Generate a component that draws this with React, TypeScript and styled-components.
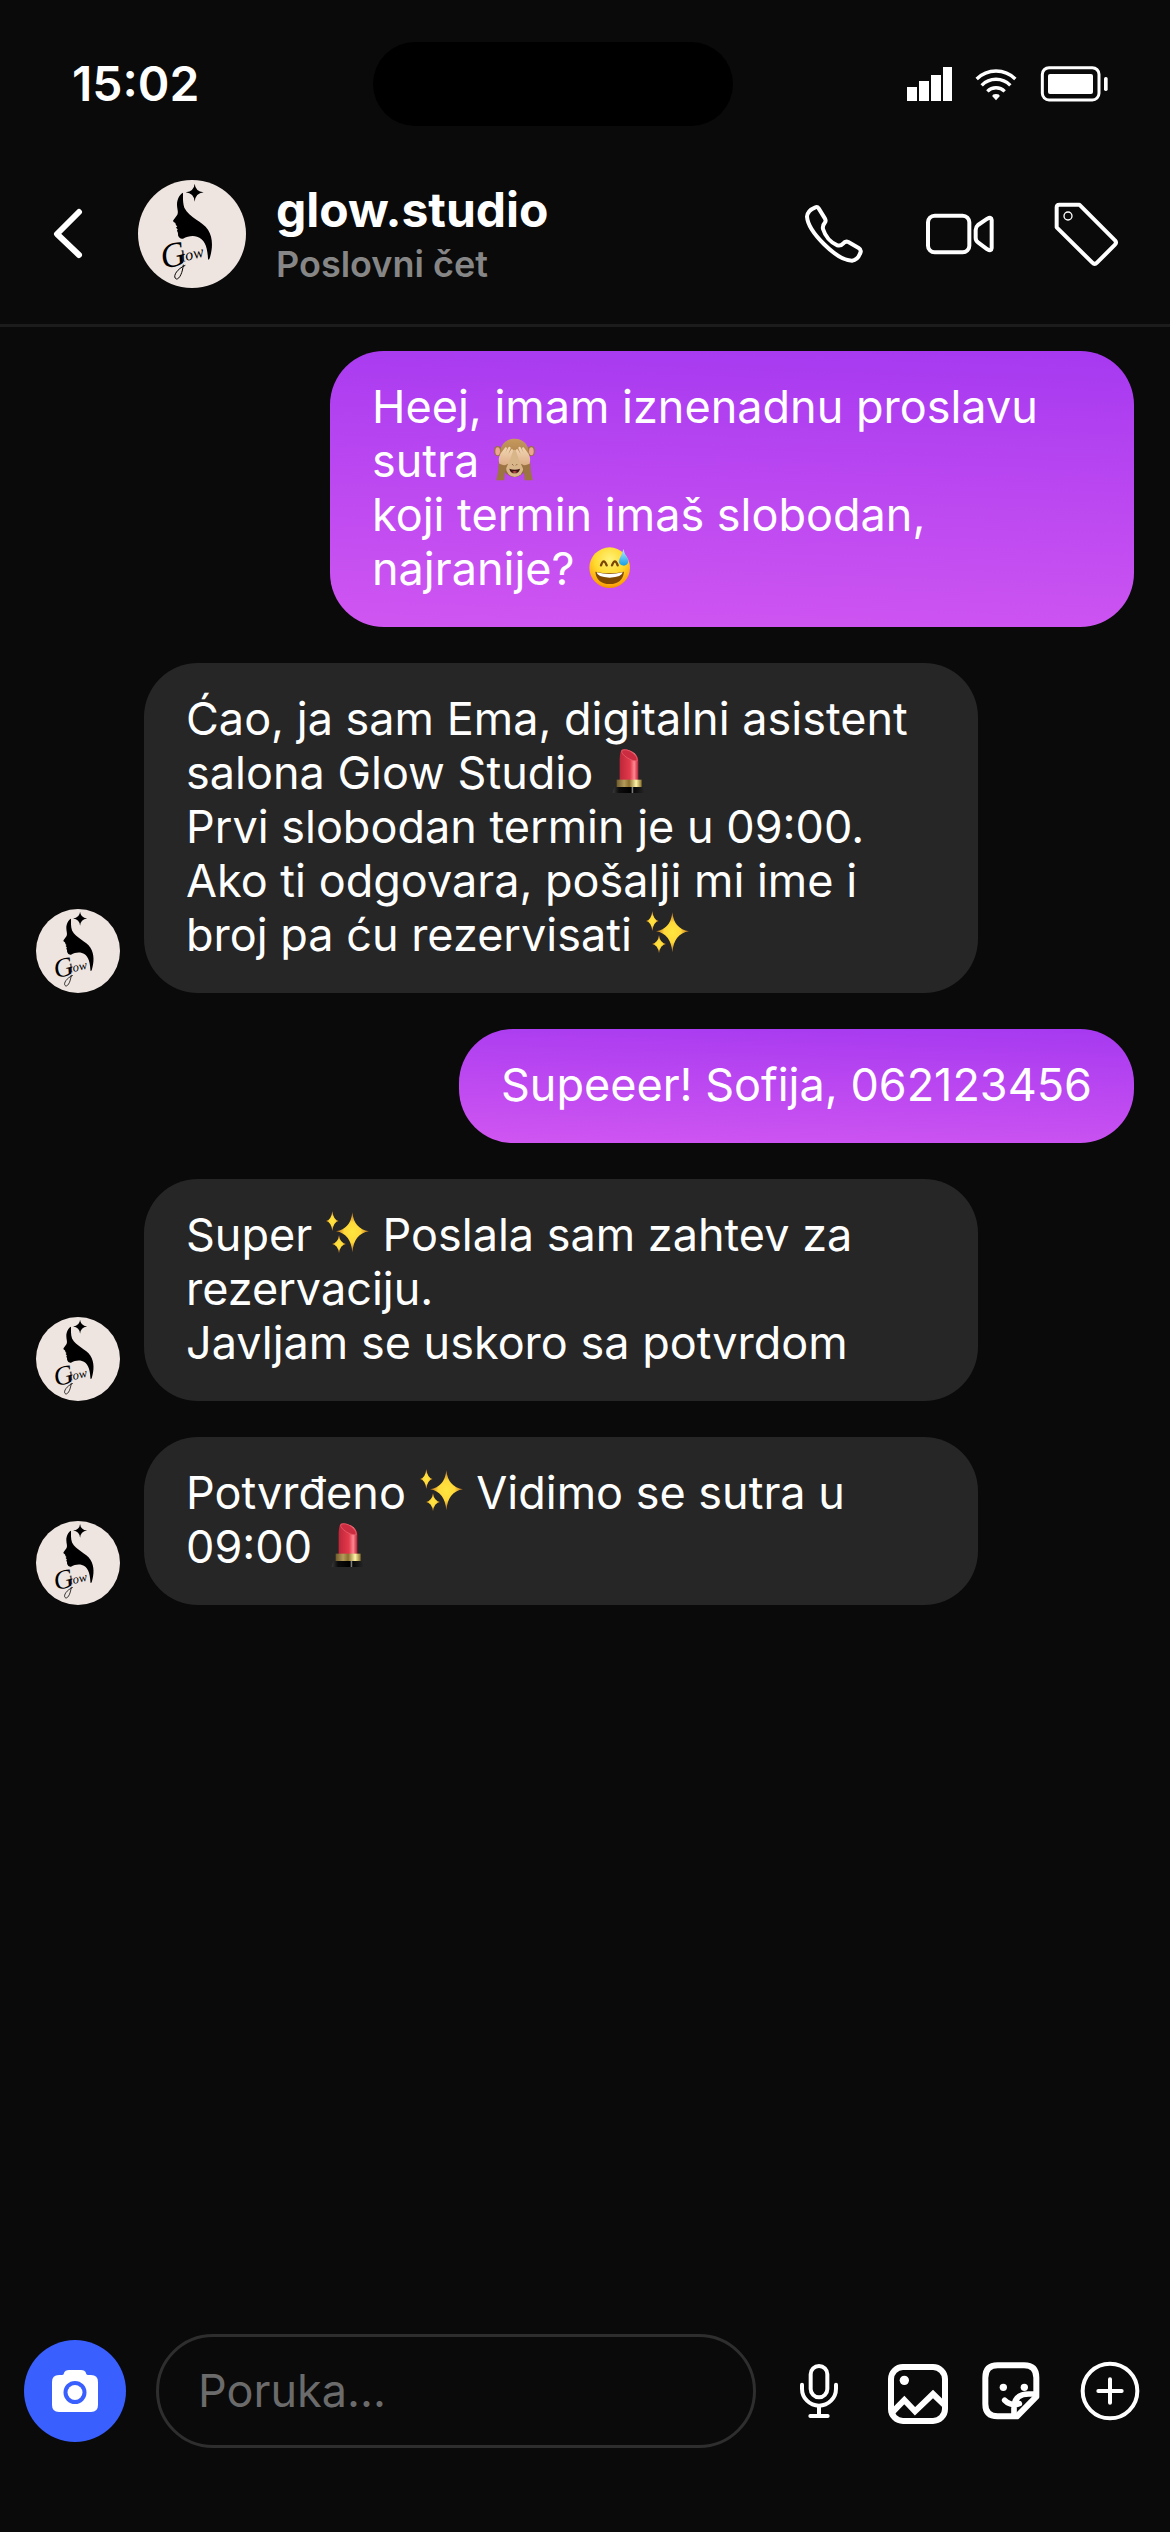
import React from 'react';
import styled, { createGlobalStyle } from 'styled-components';

const GlobalStyle = createGlobalStyle`
  * { box-sizing: border-box; }
  body {
    margin: 0;
    background: #0a0a0a;
    color: #fff;
    font-family: Inter, "Liberation Sans", sans-serif;
  }
`;

const Screen = styled.div`
  display: flex;
  flex-direction: column;
  min-height: 100vh;
`;

const StatusBar = styled.div`
  display: flex;
  justify-content: space-between;
  align-items: center;
  padding: 42px 62px 0 72px;
`;

const Clock = styled.time`
  font-size: 48px;
  line-height: 60px;
  font-weight: 600;
`;

const Island = styled.div`
  width: 360px;
  height: 84px;
  border-radius: 42px;
  background: #000;
`;

const StatusIcons = styled.div`
  display: flex;
  align-items: center;
  gap: 23px;
`;

const Header = styled.header`
  display: flex;
  align-items: center;
  padding: 54px 51px 36px 36px;
  border-bottom: 3px solid #1c1c1c;
`;

const IconButton = styled.button`
  display: flex;
  align-items: center;
  justify-content: center;
  flex: none;
  padding: 0;
  border: 0;
  background: none;
  color: inherit;
  cursor: pointer;
`;

const Profile = styled.div`
  display: flex;
  align-items: center;
  gap: 30px;
  flex: 1;
  margin-left: 36px;
`;

const Name = styled.h1`
  margin: 0;
  font-size: 48px;
  line-height: 60px;
  font-weight: 700;
`;

const Subtitle = styled.p`
  margin: 0;
  font-size: 36px;
  line-height: 48px;
  font-weight: 600;
  color: #868686;
`;

const HeaderActions = styled.div`
  display: flex;
  align-items: center;
  gap: 58px;
`;

const AvatarFrame = styled.svg`
  display: block;
  flex: none;
  border-radius: 50%;
`;

const Chat = styled.main`
  display: flex;
  flex: 1;
  flex-direction: column;
  gap: 36px;
  padding: 24px 36px;
`;

const MessageRow = styled.div<{ $own?: boolean }>`
  display: flex;
  align-items: flex-end;
  justify-content: ${p => (p.$own ? 'flex-end' : 'flex-start')};
  gap: 24px;
`;

const Bubble = styled.p<{ $own?: boolean }>`
  margin: 0;
  max-width: ${p => (p.$own ? '804px' : '834px')};
  padding: 29px 42px 31px;
  border-radius: 54px;
  background: ${p => (p.$own ? 'linear-gradient(182deg, #a639f0, #d056f1)' : '#262626')};
  font-size: 45px;
  line-height: 54px;
  white-space: pre-line;
`;

const EmojiArt = styled.svg`
  width: 45px;
  height: 45px;
  vertical-align: -5px;
`;

const Composer = styled.form`
  display: flex;
  align-items: center;
  gap: 30px;
  padding: 0 30px 84px 24px;
`;

const CameraButton = styled(IconButton)`
  width: 102px;
  height: 102px;
  border-radius: 50%;
  background: #3a5fff;
`;

const MessageInput = styled.input`
  flex: 1;
  min-width: 0;
  height: 114px;
  padding: 0 39px 2px;
  border: 3px solid #2e2e2e;
  border-radius: 57px;
  background: transparent;
  color: #fff;
  font-family: inherit;
  font-size: 45px;
  outline: none;
  &::placeholder {
    color: #6b6b6b;
    opacity: 1;
  }
`;

const Avatar = ({ size }: { size: number }) => (
  <AvatarFrame width={size} height={size} viewBox="24 30 324 324" role="img" aria-label="glow.studio">
    <rect x="24" y="30" width="324" height="324" fill="#eee5e1" />
    <path d="M194 41 Q196 64 221 67 Q196 70 194 95 Q192 70 167 67 Q192 64 194 41Z" />
    <path d="M159 68 C148 73 141 89 141 104 C141 116 146 125 142 134 L130 151 Q127 155 136 159 L138 166 L142 169 L138 173 L143 178 L141 182 Q145 188 144 196 Q148 208 159 206 C172 199 188 196 201 200 C224 207 232 229 234 266 Q236 273 239 265 C248 236 250 204 234 179 C218 154 178 143 163 113 C158 98 159 83 159 68Z" />
    <g transform="rotate(-14 110 302)" fontFamily="'Liberation Serif', serif" fontStyle="italic">
      <text x="102" y="296" fontSize="104">G<tspan fontSize="48" dx="-16" dy="-8">low</tspan></text>
    </g>
    <path d="M160 284 C158 306 149 328 139 327 C127 322 138 298 166 286" fill="none" stroke="#000" strokeWidth="3" />
  </AvatarFrame>
);

const Monkey = () => (
  <EmojiArt viewBox="0 0 135 135" role="img" aria-label="🙈">
    <defs>
      <linearGradient id="mk-fur" x1="0" x2="0" y1="0" y2="1">
        <stop offset="0" stopColor="#c79a5d" />
        <stop offset="1" stopColor="#8a6238" />
      </linearGradient>
      <linearGradient id="mk-hand" x1="0" x2="0" y1="0" y2="1">
        <stop offset="0" stopColor="#f3d7b6" />
        <stop offset="1" stopColor="#dcae86" />
      </linearGradient>
    </defs>
    <ellipse cx="17" cy="42" rx="11" ry="16" fill="#9a7043" />
    <ellipse cx="118" cy="42" rx="11" ry="16" fill="#9a7043" />
    <ellipse cx="17" cy="43" rx="7" ry="12" fill="#eda693" />
    <ellipse cx="118" cy="43" rx="7" ry="12" fill="#eda693" />
    <path d="M68 5 C98 5 113 28 111 58 C109 92 96 119 68 120 C40 119 26 92 24 58 C22 28 38 5 68 5Z" fill="url(#mk-fur)" />
    <ellipse cx="68" cy="92" rx="26" ry="28" fill="#d9b58a" />
    <ellipse cx="68" cy="62" rx="15" ry="24" fill="#d9b58a" />
    <path d="M61 82 l3 3 M75 82 l-3 3" stroke="#6b4327" strokeWidth="3" />
    <path d="M52 95 Q68 101 84 95 Q81 109 68 109 Q55 109 52 95Z" fill="#3c1414" />
    <path d="M60 105 Q68 100 76 105 Q68 110 60 105Z" fill="#e05a56" />
    <path d="M13 130 Q20 102 20 76 L48 81 Q37 102 37 130Z M122 130 Q115 102 115 76 L87 81 Q98 102 98 130Z" fill="#9c7342" />
    <path d="M22 80 Q16 60 31 43 L40 31 Q45 29 45 35 L40 47 L50 30 Q56 27 56 34 L49 51 L58 37 Q63 34 63 42 L53 71 Q45 87 33 84Z" fill="url(#mk-hand)" />
    <path d="M113 80 Q119 60 104 43 L95 31 Q90 29 90 35 L95 47 L85 30 Q79 27 79 34 L86 51 L77 37 Q72 34 72 42 L82 71 Q90 87 102 84Z" fill="url(#mk-hand)" />
  </EmojiArt>
);

const SweatSmile = () => (
  <EmojiArt viewBox="0 0 135 135" role="img" aria-label="😅">
    <defs>
      <radialGradient id="sw-face" cx="0.5" cy="0.3" r="0.75">
        <stop offset="0" stopColor="#fff27a" />
        <stop offset="0.5" stopColor="#ffd92e" />
        <stop offset="0.85" stopColor="#fda60a" />
        <stop offset="1" stopColor="#e87f00" />
      </radialGradient>
      <linearGradient id="sw-drop" x1="0" x2="0" y1="0" y2="1">
        <stop offset="0" stopColor="#b8ecff" />
        <stop offset="1" stopColor="#159ee6" />
      </linearGradient>
    </defs>
    <circle cx="68" cy="68" r="61" fill="url(#sw-face)" />
    <path d="M42 61 Q50 37 59 61 M75 61 Q84 37 92 61" fill="none" stroke="#7a4500" strokeWidth="7" strokeLinecap="round" />
    <path d="M25 80 Q68 90 111 80 Q107 117 68 117 Q29 117 25 80Z" fill="#814800" />
    <path d="M29 82 Q68 92 107 82 Q106 97 68 98 Q30 97 29 82Z" fill="#fff" />
    <path d="M109 12 Q112 27 122 40 Q129 60 111 62 Q92 60 97 43 Q106 27 109 12Z" fill="url(#sw-drop)" />
  </EmojiArt>
);

const Lipstick = () => (
  <EmojiArt viewBox="0 0 135 135" role="img" aria-label="💄">
    <defs>
      <linearGradient id="lp-red">
        <stop offset="0" stopColor="#bd2639" />
        <stop offset="0.55" stopColor="#e23a4b" />
        <stop offset="0.78" stopColor="#ff8791" />
        <stop offset="1" stopColor="#b91f34" />
      </linearGradient>
      <linearGradient id="lp-gold">
        <stop offset="0" stopColor="#6f5a2c" />
        <stop offset="0.3" stopColor="#b49b5a" />
        <stop offset="0.5" stopColor="#8b6f30" />
        <stop offset="0.78" stopColor="#fff5a8" />
        <stop offset="1" stopColor="#8c702d" />
      </linearGradient>
      <linearGradient id="lp-base">
        <stop offset="0" stopColor="#3a3a3a" />
        <stop offset="0.2" stopColor="#0c0c0c" />
        <stop offset="0.58" stopColor="#000" />
        <stop offset="0.61" stopColor="#999" />
        <stop offset="0.66" stopColor="#080808" />
        <stop offset="1" stopColor="#262626" />
      </linearGradient>
    </defs>
    <path d="M41 94 V30 Q42 5 49 1 Q68 -2 86 13 Q98 24 97 40 V94Z" fill="url(#lp-red)" />
    <path d="M47 5 Q60 -3 81 12 Q96 25 94 35 Q82 38 63 26 Q45 14 47 5Z" fill="#cc2c40" stroke="#ee6672" strokeWidth="2" />
    <rect x="32" y="92" width="75" height="23" fill="url(#lp-gold)" />
    <path d="M26 114 H110 Q115 122 116 132 H20 Q21 122 26 114Z" fill="url(#lp-base)" />
  </EmojiArt>
);

const Sparkles = () => (
  <EmojiArt viewBox="0 0 135 135" role="img" aria-label="✨">
    <defs>
      <radialGradient id="sp-gold">
        <stop offset="0" stopColor="#ffe63f" />
        <stop offset="0.5" stopColor="#ffd83a" />
        <stop offset="1" stopColor="#b5681f" />
      </radialGradient>
    </defs>
    <path fill="url(#sp-gold)" d="M82 4 Q87 54 132 61 Q87 68 82 124 Q77 68 33 61 Q77 54 82 4Z" />
    <path fill="url(#sp-gold)" d="M22 0 Q25 27 41 30 Q25 33 22 60 Q19 33 3 30 Q19 27 22 0Z" />
    <path fill="url(#sp-gold)" d="M42 72 Q45 96 63 99 Q45 102 42 127 Q39 102 21 99 Q39 96 42 72Z" />
  </EmojiArt>
);

const SignalIcon = () => (
  <svg width="46" height="36" viewBox="0 0 46 36" fill="#fff" role="img" aria-label="Signal">
    <rect x="1" y="21" width="10" height="14" />
    <rect x="13" y="15" width="10" height="20" />
    <rect x="25" y="9" width="10" height="26" />
    <rect x="37" y="1" width="9" height="34" />
  </svg>
);

const WifiIcon = () => (
  <svg width="42" height="36" viewBox="555 48 126 108" fill="none" stroke="#fff" strokeWidth="10" role="img" aria-label="Wi-Fi">
    <path d="M560 87 A82 82 0 0 1 676 87" />
    <path d="M575 106 A60 60 0 0 1 661 106" />
    <path d="M592 124 A37 37 0 0 1 644 124" />
    <path d="M607 139 Q607 132 618 132 Q629 132 629 139 L618 151Z" fill="#fff" stroke="none" />
  </svg>
);

const BatteryIcon = () => (
  <svg width="68" height="36" viewBox="750 48 204 108" role="img" aria-label="Baterija">
    <rect x="757" y="53" width="170" height="97" rx="20" fill="none" stroke="#fff" strokeWidth="9" />
    <rect x="774" y="72" width="135" height="60" rx="6" fill="#fff" />
    <rect x="942" y="81" width="11" height="42" rx="5" fill="#fff" />
  </svg>
);

const line = {
  fill: 'none',
  stroke: 'currentColor',
  strokeWidth: 12,
  strokeLinecap: 'round',
  strokeLinejoin: 'round',
} as const;

const BackIcon = () => (
  <svg width="66" height="66" viewBox="0 0 66 66" {...line} strokeWidth={6}>
    <path d="M43 11 L21 33 L43 54" />
  </svg>
);

const PhoneIcon = () => (
  <svg width="60" height="60" viewBox="45 462 180 180" {...line}>
    <path d="M76 472 Q82 469 86 475 L105 506 Q109 513 104 519 Q97 526 99 537 Q110 572 142 586 Q152 589 159 581 Q166 572 175 576 L206 594 Q214 599 212 606 Q204 630 186 632 C140 632 54 545 51 500 Q52 482 76 472Z" />
  </svg>
);

const VideoIcon = () => (
  <svg width="72" height="72" viewBox="399 444 216 216" {...line}>
    <rect x="414" y="497" width="124" height="110" rx="20" />
    <path d="M557 540 Q557 531 564 525 L592 506 Q604 499 605 510 V594 Q604 605 592 598 L564 577 Q557 572 557 563Z" />
  </svg>
);

const TagIcon = () => (
  <svg width="66" height="66" viewBox="789 453 198 198" {...line}>
    <path d="M800 472 Q800 464 808 464 H868 L975 571 Q981 578 975 584 L921 638 Q914 645 907 638 L800 532Z" />
    <circle cx="834" cy="498" r="12" strokeWidth="4" />
  </svg>
);

const CameraIcon = () => (
  <svg width="60" height="60" viewBox="0 0 60 60" fill="#fff">
    <path fillRule="evenodd" d="M14 14 H17 Q19 14 19 12 Q20 9 24 9 H36 Q40 9 41 12 Q41 14 44 14 H46 Q53 14 53 21 V44 Q53 51 46 51 H14 Q7 51 7 44 V21 Q7 14 14 14Z M30 20 A11 11 0 1 0 30 43 A11 11 0 1 0 30 20Z" />
    <circle cx="30" cy="31.500" r="7.500" />
  </svg>
);

const MicIcon = () => (
  <svg width="66" height="66" viewBox="138 144 198 198" {...line}>
    <rect x="212" y="168" width="50" height="94" rx="25" />
    <path d="M186 224 V236 A51 51 0 0 0 288 236 V224 M237 288 V318 M211 318 H263" />
  </svg>
);

const ImageIcon = () => (
  <svg width="66" height="66" viewBox="426 144 198 198" {...line} strokeWidth={18}>
    <rect x="453" y="171" width="162" height="162" rx="36" />
    <path d="M456 308 L493 270 L525 304 L579 252 L612 284" strokeLinejoin="miter" />
    <circle cx="493" cy="211" r="14" fill="currentColor" stroke="none" />
  </svg>
);

const StickerIcon = () => (
  <svg width="66" height="66" viewBox="714 144 198 198" {...line} strokeWidth={18}>
    <path d="M889 260 V203 Q889 166 852 166 H773 Q736 166 736 203 V282 Q736 319 773 319 H831Z" />
    <path d="M822 316 V288 Q826 252 866 252 H886 M794 271 Q813 290 838 281" strokeWidth={17} />
    <circle cx="790" cy="232" r="11" fill="currentColor" stroke="none" />
    <circle cx="853" cy="232" r="11" fill="currentColor" stroke="none" />
  </svg>
);

const PlusIcon = () => (
  <svg width="66" height="66" viewBox="1002 144 198 198" {...line}>
    <circle cx="1110" cy="243" r="82" />
    <path d="M1110 208 V278 M1075 243 H1145" />
  </svg>
);

interface Message {
  own?: boolean;
  body: React.ReactNode;
}

const messages: Message[] = [
  {
    own: true,
    body: <>Heej, imam iznenadnu proslavu sutra <Monkey />{'\n'}koji termin imaš slobodan, najranije? <SweatSmile /></>,
  },
  {
    body: <>Ćao, ja sam Ema, digitalni asistent salona Glow Studio <Lipstick />{'\n'}Prvi slobodan termin je u 09:00. Ako ti odgovara, pošalji mi ime i broj pa ću rezervisati <Sparkles /></>,
  },
  { own: true, body: 'Supeeer! Sofija, 062123456' },
  {
    body: <>Super <Sparkles /> Poslala sam zahtev za rezervaciju.{'\n'}Javljam se uskoro sa potvrdom</>,
  },
  { body: <>Potvrđeno <Sparkles /> Vidimo se sutra u 09:00 <Lipstick /></> },
];

export default function App() {
  return (
    <Screen>
      <GlobalStyle />
      <StatusBar>
        <Clock>15:02</Clock>
        <Island />
        <StatusIcons>
          <SignalIcon />
          <WifiIcon />
          <BatteryIcon />
        </StatusIcons>
      </StatusBar>
      <Header>
        <IconButton aria-label="Nazad"><BackIcon /></IconButton>
        <Profile>
          <Avatar size={108} />
          <div>
            <Name>glow.studio</Name>
            <Subtitle>Poslovni čet</Subtitle>
          </div>
        </Profile>
        <HeaderActions>
          <IconButton aria-label="Poziv"><PhoneIcon /></IconButton>
          <IconButton aria-label="Video poziv"><VideoIcon /></IconButton>
          <IconButton aria-label="Oznaka"><TagIcon /></IconButton>
        </HeaderActions>
      </Header>
      <Chat>
        {messages.map((m, i) => (
          <MessageRow key={i} $own={m.own}>
            {!m.own && <Avatar size={84} />}
            <Bubble $own={m.own}>{m.body}</Bubble>
          </MessageRow>
        ))}
      </Chat>
      <Composer onSubmit={e => e.preventDefault()}>
        <CameraButton type="button" aria-label="Kamera"><CameraIcon /></CameraButton>
        <MessageInput type="text" aria-label="Poruka" placeholder="Poruka..." />
        <IconButton type="button" aria-label="Glasovna poruka"><MicIcon /></IconButton>
        <IconButton type="button" aria-label="Slika"><ImageIcon /></IconButton>
        <IconButton type="button" aria-label="Nalepnica"><StickerIcon /></IconButton>
        <IconButton type="button" aria-label="Dodaj"><PlusIcon /></IconButton>
      </Composer>
    </Screen>
  );
}
